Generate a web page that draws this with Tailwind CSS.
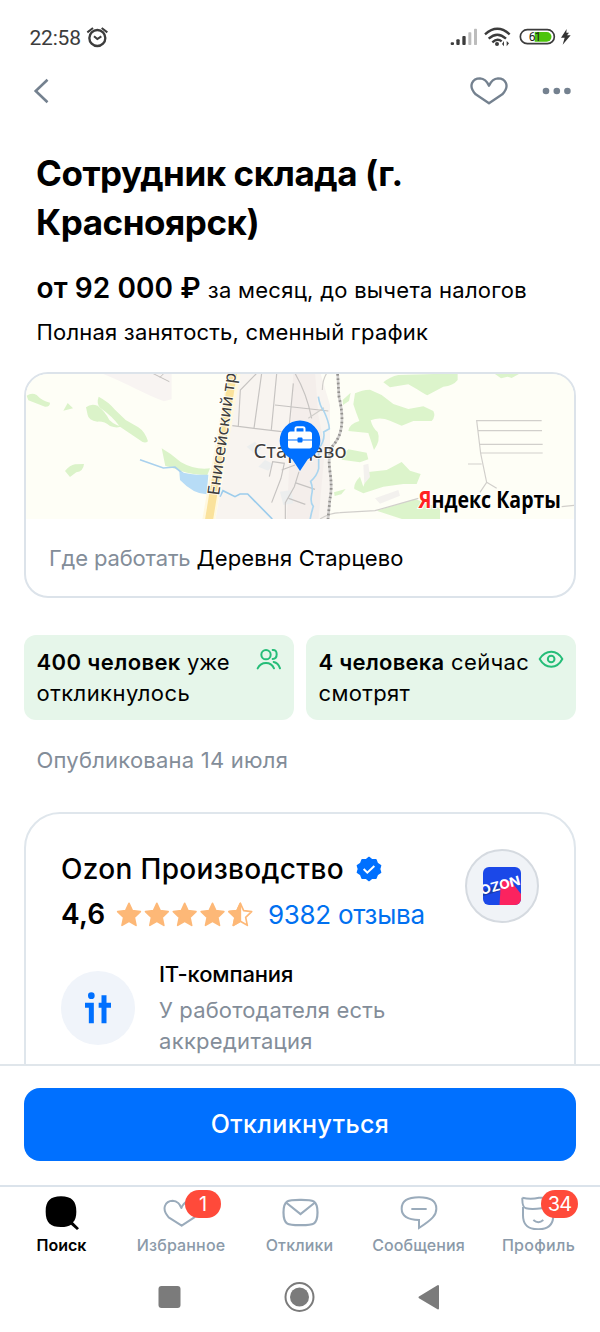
<!DOCTYPE html>
<html lang="ru">
<head>
<meta charset="utf-8">
<title>Сотрудник склада</title>
<script src="https://cdn.jsdelivr.net/npm/@tailwindcss/browser@4"></script>
</head>
<body class="bg-white">
<div class="flex h-[1332px] w-[600px] flex-col overflow-hidden bg-white font-['Inter','Liberation_Sans',sans-serif] text-black">
  <!-- Status bar -->
  <div class="flex h-[74px] shrink-0 items-center pl-[29.500px] pr-[27px] text-[#3c3c3c]">
    <span class="mt-[2px] w-[52px] whitespace-nowrap font-['Roboto',sans-serif] text-[21px] font-normal leading-6 tracking-[-0.2px]">22:58</span>
    <svg class="ml-[4px] h-[22px] w-[23px]" viewBox="255 46 69 66" fill="none" stroke="#3c3c3c" stroke-width="7"><circle cx="289" cy="82" r="24"/><path d="M279 77l10 8 12-8M259 65l17-13M319 65l-17-13" stroke-width="6"/></svg>
    <svg class="ml-auto h-[22px] w-[123px]" viewBox="150 48 369 66">
      <g fill="#3c3c3c"><rect x="152" y="97" width="10" height="8" rx="3"/><rect x="169" y="88" width="10" height="17" rx="3"/><rect x="187" y="78" width="10" height="27" rx="3"/></g>
      <g fill="#bcbcbc"><rect x="205" y="67" width="9" height="38" rx="2"/><rect x="222" y="56" width="9" height="49" rx="2"/></g>
      <g fill="none" stroke="#3c3c3c" stroke-width="7"><path d="M255 73Q292 40 329 73M266 86Q292 62 318 86M277 97Q292 83 305 94"/></g>
      <circle cx="291" cy="102" r="6" fill="#3c3c3c"/><path d="M306 102l6-9v16zM327 100l-7 9v-16z" fill="#3c3c3c"/>
      <rect x="361" y="59" width="102" height="42" rx="21" fill="#fff" stroke="#3c3c3c" stroke-width="5"/>
      <path d="M404 66h36a14 14 0 0 1 0 29h-36z" fill="#4cc40c"/>
      <text x="386" y="94" font-family="Roboto" font-size="36" fill="#222" textLength="38">61</text>
      <path d="M500 57l-17 26h11l-6 21 24-28h-11l6-8h-8z" fill="#333"/>
    </svg>
  </div>
  <!-- Navigation -->
  <div class="flex h-[34px] shrink-0 items-center justify-between pl-[33px] pr-[28px]">
    <svg class="h-[26px] w-[16px]" viewBox="0 0 16 26" fill="none" stroke="#74818f" stroke-width="2.6"><path d="M14.5 1.7L2.7 13l11.8 11.3"/></svg>
    <div class="flex items-center gap-[33px]">
      <svg class="h-[30px] w-[40px]" viewBox="207 198 120 90" fill="none" stroke="#74818f" stroke-width="7" stroke-linejoin="round"><path d="M267 280L227 253C202 227 219 205 240 205C253 206 263 218 267 227C271 218 281 206 294 205C315 205 332 227 307 253Z"/></svg>
      <svg class="h-[8px] w-[30px]" viewBox="0 0 30 8" fill="#74818f"><circle cx="4" cy="4" r="3.3"/><circle cx="14.800" cy="4" r="3.3"/><circle cx="25.400" cy="4" r="3.3"/></svg>
    </div>
  </div>
  <!-- Vacancy -->
  <div class="flex min-h-0 flex-1 flex-col overflow-hidden px-[24px]">
    <h1 class="mt-[41px] whitespace-nowrap pl-[12px] text-[35px] font-bold leading-[49px] tracking-[-0.45px]">Сотрудник склада (г.<br>Красноярск)</h1>
    <div class="mt-[23px] flex h-[36px] items-baseline gap-[7px] whitespace-nowrap pl-[12.500px] leading-[36px]"><span class="text-[28px] font-semibold tracking-[0.1px]">от 92 000 ₽</span><span class="text-[22px] tracking-[0.27px]">за месяц, до вычета налогов</span></div>
    <div class="mt-[11px] whitespace-nowrap pl-[12.500px] text-[22px] leading-[30px] tracking-[0.2px]">Полная занятость, сменный график</div>
    <div class="mt-[25px] h-[226px] w-[552px] shrink-0 overflow-hidden rounded-[24px] border-2 border-[#dce3ea]">
      <svg class="block h-[145px] w-[548px]" viewBox="26 374 548 145">
        <rect x="26" y="374" width="548" height="145" fill="#fefef6"/>
        <g transform="translate(20 365) scale(.33333)">
          <path d="M250 27L455 27V103L432 109C380 90 330 60 250 27Z" fill="#f8f4f2"/>
          <path d="M398 25l50 25M420 37l10-10" stroke="#c3c0bd" stroke-width="3" fill="none"/>
          <path d="M645 20H900L930 120V470H585L610 330Z" fill="#f8f4f0"/>
          <path d="M820 20h65l10 130 20 100-20 220H800z" fill="#f4eeeb"/>
          <path d="M680 245l25-15 20 20-20 18zM715 305l20-20 25 12-15 20zM780 380l35-5 5 40-30 5z" fill="#eceeee"/>
          <g fill="#dbf3c9"><path d="M20 92Q35 82 50 90Q65 107 90 113Q90 126 75 125L25 106Z"/><path d="M130 137l13-23 16 16z"/><path d="M198 127Q212 115 233 122Q256 140 268 165Q290 185 305 182Q295 192 270 183Q252 168 232 170Q205 165 203 150Z"/><path d="M236 95Q265 110 285 134L317 165L355 187Q375 200 384 229Q374 238 360 226L300 185Q275 152 241 129Q228 115 236 95Z"/><path d="M135 318Q150 300 165 298L192 297Q190 319 169 322L150 336Z"/><path d="M425 250Q455 267 482 291Q525 316 570 310L562 330Q520 330 482 318Q455 307 436 303Z"/></g>
          <path d="M360 284L430 309L465 306L490 327" fill="none" stroke="#a9d1ee" stroke-width="5"/>
          <path d="M478 320Q515 331 565 329L560 388Q520 387 480 345Z" fill="#b7dcf6"/>
          <path d="M643 20L566 465" stroke="#fff8df" stroke-width="38" fill="none"/>
          <path d="M640 20L567 465" stroke="#fae29c" stroke-width="24" fill="none"/>
          <path d="M600 395l9-18 36 18 15-8h23l74 75" fill="none" stroke="#9cccec" stroke-width="5"/>
          <g fill="none" stroke="#c6c3c1" stroke-width="3.5"><path d="M655 183L661 75L710 25M637 182L785 200M725 25L702 190M820 55L807 190L840 215M765 120L925 138M770 27L754 194M825 25Q860 85 875 160M748 335l10-45 35 5-10 45-28 73M785 315l40-15M837 320l-14 45-27 48v50M825 353l60 20M806 400l50 18"/></g>
          <g transform="translate(840 0)">
            <g fill="#dcf4cb"><path d="M250 52Q270 35 295 30L473 25V45Q460 62 430 65L382 91Q370 85 350 72L325 58L270 67Z"/><path d="M165 85Q185 75 210 74L245 90L280 117L325 132L370 124L400 138Q408 154 395 168L340 168L305 182L270 167Q240 155 212 166Q218 190 233 201Q243 225 222 255L205 204L145 198Q147 177 178 168Q167 140 160 118Z"/><path d="M128 105l24-22-5 25-18 12zM130 268l15-15 55 10 5 20-25 9-55-8zM585 27h72l-22 12-12-4-20 5z"/><path d="M163 372Q160 355 180 335L190 365L205 321L260 315L305 291L330 317L362 327L350 357H310L250 365L190 385ZM102 382l35-10-13 16-20 5zM230 437L345 402L420 430V470H330Z"/></g>
            <path d="M190 300l15-4 5 40-17 20zM225 400l70-25 5 17-60 24z" fill="#f3f1ee"/>
            <path d="M67 75q0-30 13-50M25 160L72 128M60 462Q90 444 120 443L225 437L355 400M725 167H530L542 265L560 352L540 382M560 352L590 370M533 197H726M539 238H728M542 264H728M504 297H545M785 425L825 421" fill="none" stroke="#d1cfcb" stroke-width="3.5"/>
            <path d="M55 95q5 30 15 40q17 35 18 56l-17 10q5 25-15 50v60q-5 22-24 38q8 20 3 40q-5 25 5 35q-10 30-15 78" fill="none" stroke="#aad5ef" stroke-width="5"/>
            <path d="M113 27L117 95Q130 150 124 187Q120 220 95 246Q83 275 90 320Q97 370 90 400L84 462" fill="none" stroke="#d2d0cf" stroke-width="8"/>
            <path d="M113 27L117 95Q130 150 124 187Q120 220 95 246Q83 275 90 320Q97 370 90 400L84 462" fill="none" stroke="#94928f" stroke-width="8" stroke-dasharray="5 8"/>
          </g>
        </g>
        <g font-family="Noto Sans" fill="#3d3d3d" stroke="#fff" stroke-opacity=".75" stroke-width="2" paint-order="stroke">
          <text transform="translate(219 496) rotate(-82)" font-size="16.800" textLength="151" lengthAdjust="spacingAndGlyphs">Енисейский тракт</text>
          <text x="253.500" y="457.500" font-size="20" textLength="93" lengthAdjust="spacingAndGlyphs">Старцево</text>
        </g>
        <path d="M300 420.500a20.300 20.300 0 0 1 20.300 20.300c0 9-5.500 15-12.500 18.500L300 471l-7.800-11.700c-7-3.500-12.500-9.500-12.500-18.500A20.300 20.300 0 0 1 300 420.500z" fill="#0070ff"/>
        <path d="M295.500 432v-3.200a1.500 1.500 0 0 1 1.500-1.500h6a1.500 1.500 0 0 1 1.500 1.500v3.200" fill="none" stroke="#fff" stroke-width="2"/>
        <rect x="288" y="431.500" width="24" height="17" rx="2.500" fill="#fff"/><path d="M288 440h24" stroke="#0070ff" stroke-width="1.200"/><rect x="297.500" y="437.500" width="5" height="5" rx="1" fill="#0070ff"/>
        <text x="418.500" y="507.500" font-family="Open Sans" font-weight="700" font-size="24" textLength="142.500" lengthAdjust="spacingAndGlyphs" stroke="#fff" stroke-width="2" paint-order="stroke"><tspan fill="#f22">Я</tspan>ндекс Карты</text>
      </svg>
      <div class="flex h-[78px] items-center gap-[6px] whitespace-nowrap pl-[23px] text-[22px]"><span class="tracking-[-0.15px] text-[#838d99]">Где работать</span><span class="tracking-[0.15px]">Деревня Старцево</span></div>
    </div>
    <div class="mt-[37px] flex shrink-0 gap-[12px] text-[22px] leading-[31px]">
      <div class="flex h-[85px] w-[270px] justify-between rounded-[12px] bg-[#e6f6ea] pl-[12.500px] pr-[12px] pt-[12px]"><p class="whitespace-nowrap tracking-[0.45px]"><b class="font-semibold tracking-[0.4px]">400 человек</b><span class="tracking-[0px]"> уже</span><br>откликнулось</p>
        <svg class="h-[24px] w-[26px]" viewBox="709 67 78 72" fill="none" stroke="#25bd78" stroke-width="6" stroke-linecap="round"><circle cx="739" cy="90" r="14"/><path d="M714 131Q722 115 739 115Q756 115 763 131M759 76q12-1 12 13t-12 14M762 112q14 3 19 19"/></svg></div>
      <div class="flex h-[85px] w-[270px] justify-between rounded-[12px] bg-[#e6f6ea] pl-[12.500px] pr-[12px] pt-[12px]"><p class="whitespace-nowrap tracking-[0.35px]"><b class="font-semibold tracking-[0.25px]">4 человека</b> сейчас<br>смотрят</p>
        <svg class="h-[24px] w-[26px]" viewBox="714 67 78 72" fill="none" stroke="#25bd78" stroke-width="6"><path d="M719 103Q732 81 754 81Q775 81 787 103Q775 126 754 126Q732 126 719 103Z" stroke-linejoin="round"/><circle cx="753.500" cy="103" r="10"/></svg></div>
    </div>
    <div class="mt-[25px] whitespace-nowrap pl-[12.500px] text-[22px] leading-[30px] tracking-[0.22px] text-[#838d99]">Опубликована 14 июля</div>
    <!-- Employer -->
    <div class="mt-[37px] flex h-[320px] shrink-0 flex-col rounded-[36px] border-2 border-[#dfe6ec] pl-[35px] pr-[35px]">
      <div class="flex justify-between pt-[35px]">
        <div class="whitespace-nowrap">
          <div class="flex h-[40px] items-center gap-[12px]"><span class="text-[28px] font-medium tracking-[0.32px]">Ozon Производство</span>
            <svg class="h-[26px] w-[26px]" viewBox="48 151 78 78"><path d="M87 155l9 7 12 0 4 11 10 7-3 10 3 10-10 7-4 11-12 0-9 7-9-7-12 0-4-11-10-7 3-10-3-10 10-7 4-11 12 0z" fill="#0070ff" stroke="#0070ff" stroke-width="4" stroke-linejoin="round"/><path d="M71 190l11 11 21-20" fill="none" stroke="#fff" stroke-width="6"/></svg></div>
          <div class="mt-[5px] flex h-[40px] items-center"><span class="w-[55px] text-[28px] font-semibold tracking-[0.2px]">4,6</span>
            <svg class="h-[26px] w-[138px]" viewBox="289 290 414 78"><defs><path id="star" d="M0-34L10-12 34-9 16 8 21 32 0 20-21 32-16 8-34-9-10-12Z"/></defs>
              <g fill="#fdb877" stroke="#fdb877" stroke-width="5" stroke-linejoin="round"><use href="#star" x="328" y="331"/><use href="#star" x="411.500" y="331"/><use href="#star" x="495" y="331"/><use href="#star" x="578.500" y="331"/><path d="M662 297L652 319 628 322 646 339 641 363 662 351Z"/><use href="#star" x="662" y="331" fill="none"/></g></svg>
            <span class="ml-[14px] text-[26px] tracking-[-0.3px] text-[#0070f0]">9382 отзыва</span></div>
        </div>
        <div class="flex h-[74px] w-[74px] items-center justify-center rounded-full border-2 border-[#d5dae0] bg-[#f0f3f7]">
          <svg class="h-[38px] w-[38px]" viewBox="0 0 38 38"><defs><clipPath id="tile"><rect width="38" height="38" rx="6"/></clipPath></defs><g clip-path="url(#tile)"><rect width="38" height="38" fill="#1b48e8"/><path d="M18 13L28 14 38 27V38H16.500Z" fill="#fb235f"/><path d="M0 29L17 24 17 17 0 23Z" fill="#173bb0"/><text transform="translate(-1.500 28) rotate(-15)" font-family="Inter" font-weight="700" font-size="13" fill="#fff" textLength="41" lengthAdjust="spacingAndGlyphs">OZON</text></g></svg>
        </div>
      </div>
      <div class="mt-[25px] flex gap-[24px]">
        <div class="mt-[12px] flex h-[74px] w-[74px] items-center justify-center rounded-full bg-[#f0f4fa]">
          <svg class="h-[32px] w-[28px]" viewBox="192 562 84 96"><circle cx="214" cy="573" r="10" fill="#0070ff"/><path d="M195 602H214V656M236 602H273M252 572V656" fill="none" stroke="#0070ff" stroke-width="15"/></svg></div>
        <div class="whitespace-nowrap text-[22px] leading-[31px]"><div class="font-medium tracking-[-0.15px]">IT-компания</div><div class="mt-[5px] tracking-[0.15px] text-[#838d99]">У работодателя есть<br><span class="tracking-[0.3px]">аккредитация</span></div></div>
      </div>
    </div>
  </div>
  <!-- Apply -->
  <div class="h-[121px] shrink-0 border-t-2 border-[#e0e6eb] bg-white px-[24px] pt-[22px]">
    <button class="h-[73px] w-[552px] rounded-[16px] bg-[#0070ff] text-[25px] font-medium tracking-[0.4px] text-white">Откликнуться</button>
  </div>
  <!-- Tabs -->
  <div class="grid h-[77px] shrink-0 grid-cols-[123px_116px_121px_117px_123px] border-t-2 border-[#dbe3eb] text-center text-[16px] font-medium leading-5 text-[#8b9aa9]">
    <div class="flex flex-col items-center pt-[7px] text-black"><svg class="h-[36px] w-[40px]" viewBox="125 41 120 108"><path d="M182 48C214 48 228 62 228 94C228 108 225 119 218 126L236 144L230 149L212 133C205 138 195 140 182 140C150 140 136 126 136 94C136 62 150 48 182 48Z"/></svg><span class="mt-[5px] font-semibold">Поиск</span></div>
    <div class="relative flex flex-col items-center pt-[7px]"><svg class="h-[36px] w-[40px]" viewBox="482 41 120 108" fill="none" stroke="#9aabbb" stroke-width="6" stroke-linejoin="round"><path d="M544 136L505 111C481 84 496 62 517 61C531 61 540 74 543 83C547 74 556 61 569 61C590 62 606 84 582 111Z"/></svg><span class="mt-[5px] whitespace-nowrap tracking-[0.15px]">Избранное</span><div class="absolute left-[62px] top-[3px] flex h-[28px] w-[36px] items-center justify-center rounded-full bg-[#ff4a3a] text-[20px] font-normal text-white">1</div></div>
    <div class="flex flex-col items-center pt-[7px]"><svg class="h-[36px] w-[40px]" viewBox="0 0 40 36" fill="none" stroke="#9aabbb" stroke-width="2.200"><path d="M20.500 5.800C8.500 5.800 3.500 5.500 3.500 18.500S8.500 31.200 20.500 31.200 37.500 31.500 37.500 18.500 32.500 5.800 20.500 5.800Z"/><path d="M6 8.500L20.500 20 35 8.500"/></svg><span class="mt-[5px] tracking-[0.15px]">Отклики</span></div>
    <div class="flex flex-col items-center pt-[7px]"><svg class="h-[36px] w-[40px]" viewBox="297 41 120 108" fill="none" stroke="#9aabbb" stroke-width="6"><path d="M357 143V119C324 118 305 107 305 85C305 63 324 51 357 51C390 51 409 63 409 85C409 104 398 117 357 143ZM334 86H380"/></svg><span class="mt-[5px] tracking-[0.1px]">Сообщения</span></div>
    <div class="relative flex flex-col items-center pt-[7px]"><svg class="h-[36px] w-[40px]" viewBox="655 41 120 108" fill="none" stroke="#9aabbb" stroke-width="6"><path d="M667 80V105C667 133 680 147 713 147C746 147 758 130 758 105V70M665 52Q690 58 715 52H745M665 52Q664 82 676 84Q700 90 758 78M698 119Q713 132 728 119"/></svg><span class="mt-[5px] tracking-[0.3px]">Профиль</span><div class="absolute left-[64px] top-[3px] flex h-[28px] w-[37px] items-center justify-center rounded-full bg-[#ff4a3a] text-[20px] font-normal tracking-[-1px] text-white">34</div></div>
  </div>
  <!-- System buttons -->
  <div class="flex h-[70px] shrink-0 items-center pl-[158px]">
    <svg class="h-[32px] w-[284px]" viewBox="0 0 284 32" fill="#7b7b7b"><rect x="0.500" y="5" width="22" height="22" rx="3"/><circle cx="141.500" cy="16" r="14" fill="none" stroke="#7b7b7b" stroke-width="2"/><circle cx="141.500" cy="16" r="9.500"/><path d="M280 5V27.500L261.500 16.300Z" stroke="#7b7b7b" stroke-width="2" stroke-linejoin="round"/></svg>
  </div>
</div>
</body>
</html>
